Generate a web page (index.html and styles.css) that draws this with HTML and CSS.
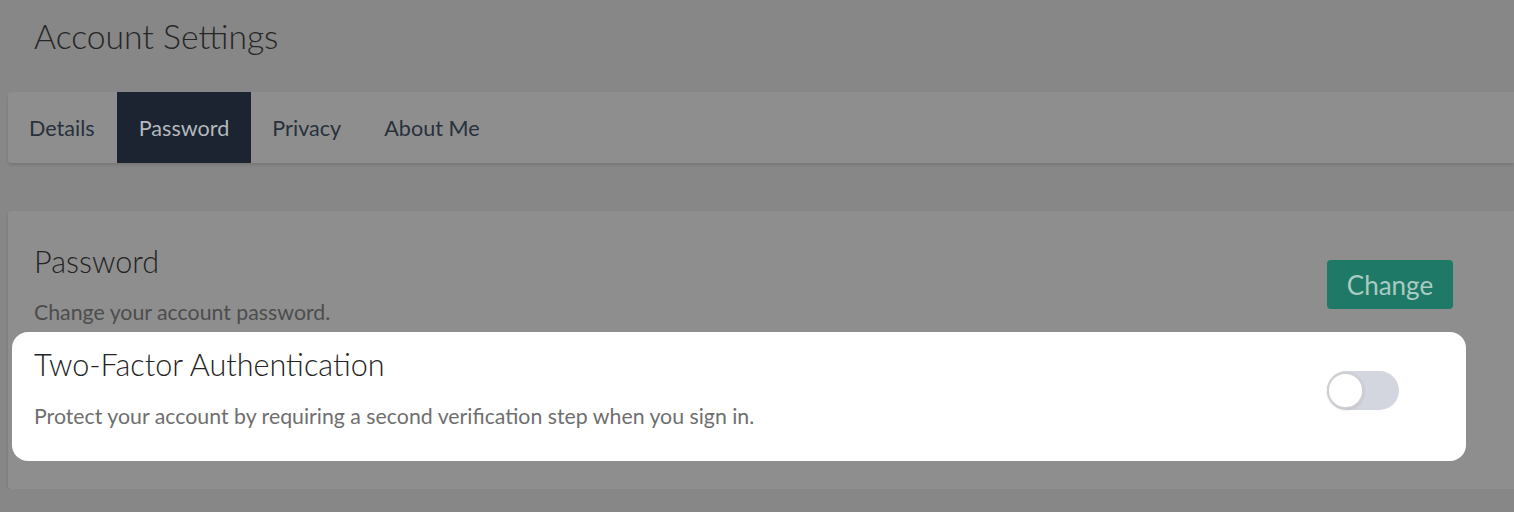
FILE: index.html
```html
<!DOCTYPE html>
<html lang="en">
<head>
<meta charset="utf-8">
<title>Account Settings</title>
<link rel="stylesheet" href="styles.css">
</head>
<body>
<div class="page">
  <h1 class="page-title">Account Settings</h1>
  <nav class="tabs">
    <a class="tab">Details</a>
    <a class="tab active">Password</a>
    <a class="tab">Privacy</a>
    <a class="tab">About Me</a>
  </nav>
  <section class="card">
    <div class="row">
      <div class="row-text">
        <h2 class="row-title">Password</h2>
        <p class="row-desc">Change your account password.</p>
      </div>
      <div class="row-action">
        <button class="btn">Change</button>
      </div>
    </div>
    <div class="row highlight">
      <div class="row-text">
        <h2 class="row-title">Two-Factor Authentication</h2>
        <p class="row-desc">Protect your account by requiring a second verification step when you sign in.</p>
      </div>
      <div class="row-action">
        <span class="toggle"><span class="knob"></span></span>
      </div>
    </div>
  </section>
</div>
</body>
</html>
```
FILE: styles.css
```css
html, body {
  margin: 0;
  padding: 0;
  background: #878787;
  font-family: "Lato", "Liberation Sans", sans-serif;
  overflow: hidden;
}
.page {
  padding: 0 0 0 8px;
}
.page-title {
  margin: 0;
  padding: 16px 0 0 26px;
  height: 92px;
  box-sizing: border-box;
  font-size: 33.7px;
  font-weight: 300;
  line-height: 40px;
  color: #262626;
}
.tabs {
  display: flex;
  height: 71px;
  background: #8e8e8e;
  border-radius: 3px 0 0 3px;
  box-shadow: 0 2px 3px rgba(0,0,0,0.12);
}
.tab {
  display: flex;
  align-items: center;
  padding: 0 22px 0 21px;
  font-size: 21.6px;
  color: #28313c;
}
.tab.active {
  background: #1b2430;
  color: #b3b8be;
  padding: 0 22px;
}
.card {
  margin-top: 48px;
  padding: 33px 0 28px 4px;
  background: #8e8e8e;
  border-radius: 3px 0 0 3px;
  box-shadow: 0 2px 3px rgba(0,0,0,0.14);
}
.row {
  width: 1454px;
  box-sizing: border-box;
  display: flex;
  justify-content: space-between;
  padding: 0 13px 0 22px;
}
.row-title {
  margin: 0;
  font-size: 30.6px;
  font-weight: 300;
  line-height: 36px;
  color: #242424;
}
.row-desc {
  margin: 19px 0 0;
  font-size: 21.3px;
  line-height: 26px;
  color: #4d4d4d;
}
.row-action {
  width: 126px;
  display: flex;
  align-items: flex-start;
}
.btn {
  margin-top: 16px;
  width: 126px;
  height: 49px;
  border: 0;
  border-radius: 4px;
  background: #1e7a66;
  color: #a9cbc2;
  font-family: inherit;
  font-size: 26px;
}
.highlight {
  margin-top: 7px;
  background: #ffffff;
  border-radius: 16px;
  padding-top: 15px;
  padding-bottom: 32px;
}
.highlight .row-desc {
  margin-top: 20px;
  color: #6f6f6f;
}
.highlight .row-action {
  padding-top: 24px;
}
.toggle {
  position: relative;
  display: block;
  width: 72px;
  height: 39px;
  border-radius: 20px;
  background: #d3d6de;
}
.knob {
  position: absolute;
  left: 0;
  top: 1px;
  width: 33px;
  height: 33px;
  border-radius: 50%;
  background: #ffffff;
  border: 2px solid #d0d0d4;
  box-shadow: 0 1px 3px rgba(0,0,0,0.12);
}
```
